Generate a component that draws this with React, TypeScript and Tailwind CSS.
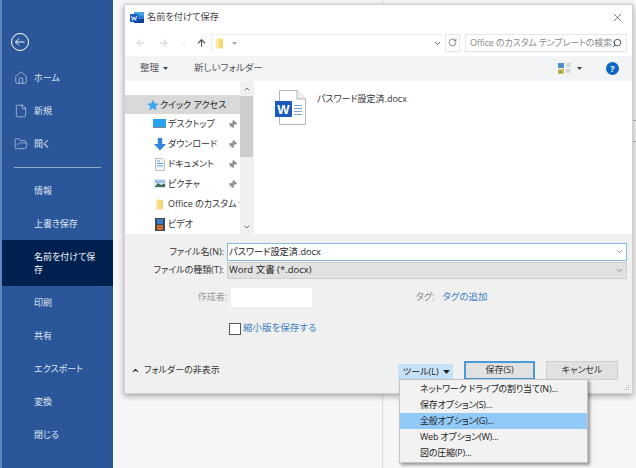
import React from "react";
import { ArrowLeft, ArrowRight, ArrowUp, ChevronDown, ChevronUp, Home, File, FolderOpen, RotateCw, Search, X, Pin } from "lucide-react";

const WordSmall = () => (
  <svg width="14" height="13" viewBox="0 0 14 13">
    <rect x="4" y="1" width="10" height="11" rx="1" fill="#2b7cd3" />
    <rect x="4" y="1" width="10" height="3.5" fill="#41a5ee" />
    <rect x="4" y="8" width="10" height="4" fill="#103f91" />
    <rect x="0" y="3" width="8" height="8" fill="#185abd" />
    <path d="M1.4 4.8 L2.6 9.2 L4 6 L5.4 9.2 L6.6 4.8" stroke="#fff" strokeWidth="0.9" fill="none" />
  </svg>
);

const WordDoc = () => (
  <svg width="32" height="36" viewBox="0 0 32 36">
    <path d="M4.5 .5 H22 L30.5 9 V34.5 H4.5 Z" fill="#fff" stroke="#b5b5b5" />
    <path d="M22 .5 V9 H30.5" fill="#f0f0f0" stroke="#b5b5b5" />
    <rect x="0" y="11" width="17" height="16" fill="#185abd" />
    <text x="8.5" y="23.5" textAnchor="middle" fontSize="13" fontWeight="700" fill="#fff" fontFamily="Liberation Sans">W</text>
    <path d="M19 15.5 H27 M19 18.5 H27 M19 21.5 H27 M19 24.5 H27" stroke="#7ba7dc" strokeWidth="1.2" />
  </svg>
);

const Folder = () => (
  <svg width="7" height="11" viewBox="0 0 8 11">
    <rect x="0" y="0" width="8" height="11" fill="#f7d674" />
    <rect x="0" y="0" width="3" height="11" fill="#fbe7a6" />
  </svg>
);

const Star = () => (
  <svg width="12" height="12" viewBox="0 0 24 24">
    <path d="M12 1 L15.4 8.6 L23.5 9.4 L17.4 14.8 L19.2 23 L12 18.7 L4.8 23 L6.6 14.8 L.5 9.4 L8.6 8.6 Z" fill="#3da5ee" />
  </svg>
);

const Desktop = () => (
  <svg width="13" height="10" viewBox="0 0 13 10">
    <rect width="13" height="8" fill="#2aa3ef" />
    <rect y="8" width="13" height="1" fill="#7b8b99" />
  </svg>
);

const Down = () => (
  <svg width="12" height="13" viewBox="0 0 12 13">
    <path d="M3.8 0 H8.2 V6 H12 L6 12.5 L0 6 H3.8 Z" fill="#2f84dc" />
  </svg>
);

const Docs = () => (
  <svg width="10" height="13" viewBox="0 0 10 13">
    <path d="M.5 .5 H7 L9.5 3 V12.5 H.5 Z" fill="#f3f6f8" stroke="#b8bec4" />
    <path d="M2 3 H5 M2 5.5 H8 M2 8 H8" stroke="#5aa6dc" strokeWidth="1" />
  </svg>
);

const Pic = () => (
  <svg width="12" height="10" viewBox="0 0 12 10">
    <rect width="12" height="9" fill="#dfe8ee" />
    <rect x="1" y="1" width="10" height="3" fill="#9cc3df" />
    <path d="M1 7.5 L4 4 L7 6 L11 4.5 V8 H1 Z" fill="#40705a" />
  </svg>
);

const Video = () => (
  <svg width="10" height="13" viewBox="0 0 10 13">
    <rect width="10" height="13" fill="#3d4a55" />
    <rect x="2" y="1" width="6" height="5" fill="#3d79c8" />
    <rect x="2" y="7" width="6" height="5" fill="#c9682f" />
  </svg>
);

const ViewIcon = () => (
  <svg width="13" height="12" viewBox="0 0 13 12">
    <rect x="0" y="0" width="6" height="5" fill="#4e8fc7" />
    <rect x="0" y="6" width="6" height="5" fill="#d9b75a" />
    <rect x="1" y="8" width="3" height="2" fill="#6aa84f" />
    <path d="M8 1 H13 M8 3 H12 M8 7 H13 M8 9 H12" stroke="#bbb" strokeWidth="1" />
  </svg>
);

const Caret = ({ c = "#444", w = 5, h = 3 }: { c?: string; w?: number; h?: number }) => (
  <svg width={w} height={h} viewBox="0 0 5 3"><path d="M0 0 H5 L2.5 3 Z" fill={c} /></svg>
);

const side = (t: string) => (
  <div key={t} className="h-[33px] flex items-center pl-[32px] text-[#dfe7f3]">{t}</div>
);

const nav: [React.ReactNode, string, boolean][] = [
  [<Desktop />, "デスクトップ", true],
  [<Down />, "ダウンロード", true],
  [<Docs />, "ドキュメント", true],
  [<Pic />, "ピクチャ", true],
  [<Folder />, "Office のカスタム テンプレート", false],
  [<Video />, "ビデオ", false],
];

const menu = ["ネットワーク ドライブの割り当て(N)...", "保存オプション(S)...", "全般オプション(G)...", "Web オプション(W)...", "図の圧縮(P)..."];

export default function App() {
  return (
    <div className="relative w-[636px] h-[468px] overflow-hidden flex bg-[#f6f6f6] font-['Open_Sans','Noto_Sans_CJK_JP',sans-serif] [font-feature-settings:'palt'] text-[9px] text-[#333]">
      {/* backstage sidebar */}
      <aside className="w-[113px] shrink-0 bg-[#2b579a] border-l-2 border-[#5f86bd] flex flex-col">
        <div className="pt-[32px] pl-[8px] h-[61px]">
          <svg width="20" height="20" viewBox="0 0 20 20" fill="none" stroke="#fff" strokeWidth="1">
            <circle cx="10" cy="10" r="8.5" />
            <path d="M14.5 10 H5.5 M9 6.5 L5.5 10 L9 13.5" />
          </svg>
        </div>
        {[
          [<Home key="a" size={14} strokeWidth={1} />, "ホーム"],
          [<File key="b" size={14} strokeWidth={1} />, "新規"],
          [<FolderOpen key="c" size={14} strokeWidth={1} />, "開く"],
        ].map(([icon, t], i) => (
          <div key={i} className="h-[33px] flex items-center pl-[12px] gap-[6px] text-[#dfe7f3]">
            {icon}
            <span>{t}</span>
          </div>
        ))}
        <div className="mx-[12px] mt-[7px] mb-[6px] h-px bg-[#8fa9cf]" />
        {side("情報")}
        {side("上書き保存")}
        <div className="h-[46px] bg-[#002050] flex items-center pl-[32px] text-[#f2f5fa] leading-[13px] whitespace-nowrap">
          <span>名前を付けて保<br />存</span>
        </div>
        {["印刷", "共有", "エクスポート", "変換", "閉じる"].map((t) => side(t))}
      </aside>

      {/* content behind the dialog */}
      <div className="flex-1 flex justify-start">
        <div className="ml-[269px] w-px bg-[#dcdcdc]" />
      </div>
      <div className="absolute right-0 top-[120px] w-[4px] h-px bg-[#bdbdbd]" />
      <div className="absolute right-0 top-[141px] w-[4px] h-px bg-[#bdbdbd]" />

      {/* dialog window */}
      <section className="absolute left-[124px] top-[4px] w-[509px] h-[390px] bg-white border border-[#d0d0d0] shadow-[0_2px_6px_rgba(0,0,0,0.35)] flex flex-col">
        <header className="h-[24px] flex items-center pl-[5px] pr-[8px] gap-[2px]">
          <WordSmall />
          <span className="ml-[1px] text-[9.2px] text-[#444]">名前を付けて保存</span>
          <X size={13} strokeWidth={1.1} className="ml-auto text-[#222]" />
        </header>

        <div className="h-[27px] flex items-center pl-[10px] pr-[5px]">
          <ArrowLeft size={12} className="text-[#c8c8c8]" />
          <ArrowRight size={12} className="ml-[12px] text-[#c8c8c8]" />
          <ChevronDown size={8} className="ml-[11px] text-[#c8c8c8]" />
          <ArrowUp size={12} strokeWidth={2.4} className="ml-[8px] text-[#555]" />
          <div className="ml-[4px] h-[18px] w-[240px] flex items-center border-l border-t border-[#eeeeee] pl-[4px]">
            <Folder />
            <span className="ml-[9px]"><Caret c="#aaa" /></span>
            <div className="flex-1" />
          </div>
          <div className="flex-1 h-[18px] flex items-center justify-end border-t border-[#eeeeee]">
            <ChevronDown size={9} strokeWidth={2.5} className="text-[#555]" />
          </div>
          <div className="ml-[3px] w-[16px] h-[18px] flex items-center justify-center border border-[#e6e6e6]">
            <RotateCw size={9} strokeWidth={1.8} className="text-[#555]" />
          </div>
          <div className="ml-[5px] w-[168px] h-[18px] flex items-center pl-[4px] pr-[4px] border border-[#e6e6e6] text-[#8a8a8a] whitespace-nowrap">
            <span className="flex-1 text-[9px] tracking-[-0.15px]">Office のカスタム テンプレートの検索</span>
            <Search size={10} strokeWidth={2} className="text-[#333] -scale-x-100 shrink-0" />
          </div>
        </div>

        <div className="h-[25px] bg-[#f3f4f6] flex items-center pl-[15px] pr-[13px] text-[#555] text-[9.5px]">
          <span>整理</span>
          <span className="ml-[4px]"><Caret /></span>
          <span className="ml-[26px]">新しいフォルダー</span>
          <span className="ml-auto"><ViewIcon /></span>
          <span className="ml-[6px]"><Caret /></span>
          <span className="ml-[24px] w-[13px] h-[13px] rounded-full bg-[#0a66c2] text-white text-[9px] font-bold flex items-center justify-center">?</span>
        </div>

        <div className="h-[153px] flex bg-white">
          <div className="w-[115px] shrink-0 pt-[14px] overflow-hidden">
            <div className="h-[19px] bg-[#d9d9d9] flex items-center pl-[22px] gap-[1px] text-[#222] whitespace-nowrap">
              <Star />
              <span>クイック アクセス</span>
            </div>
            {nav.map(([icon, t, pin]) => (
              <div key={t} className="h-[20px] flex items-center pl-[27px] text-[#333] whitespace-nowrap">
                <span className="w-[15px] shrink-0 flex justify-center">{icon}</span>
                <span className="ml-[1px] flex-1 overflow-hidden">{t}</span>
                {pin && <Pin size={9} className="text-[#8f8f8f] mr-[3px] rotate-45 shrink-0" fill="#8f8f8f" />}
              </div>
            ))}
          </div>
          <div className="w-[13px] shrink-0 bg-[#f0f0f0] flex flex-col items-center">
            <div className="h-[15px] flex items-center"><ChevronUp size={8} strokeWidth={2.4} className="text-[#555]" /></div>
            <div className="w-full h-[61px] bg-[#cdcdcd]" />
            <div className="mt-auto h-[15px] flex items-center"><ChevronDown size={8} strokeWidth={2.4} className="text-[#555]" /></div>
          </div>
          <div className="flex-1 border-l border-[#f0f0f0] pl-[21px] pt-[9px] flex items-start">
            <WordDoc />
            <span className="ml-[10px] mt-[2px] text-[9px] text-[#333]">パスワード設定済.docx</span>
          </div>
        </div>

        <div className="relative flex-1 bg-[#f0f0f0] flex flex-col pt-[8px] pr-[5px]">
          <div className="h-[19px] flex items-center">
            <label className="w-[102px] text-right pr-[3px] text-[#333]">ファイル名(N):</label>
            <div className="flex-1 h-[18px] bg-white border border-[#84bbd6] flex items-center pl-[1px] pr-[2px]">
              <span className="flex-1 text-[9.2px] text-[#222]">パスワード設定済.docx</span>
              <ChevronDown size={9} className="text-[#777]" />
            </div>
          </div>
          <div className="h-[18px] flex items-center">
            <label className="w-[102px] text-right pr-[3px] text-[#333]">ファイルの種類(T):</label>
            <div className="flex-1 h-[17px] bg-[#e1e1e1] border border-[#cfcfcf] flex items-center pl-[1px] pr-[2px]">
              <span className="flex-1 text-[9.5px] text-[#222]">Word 文書 (*.docx)</span>
              <ChevronDown size={9} className="text-[#777]" />
            </div>
          </div>
          <div className="mt-[8px] h-[20px] flex items-center">
            <label className="w-[102px] text-right text-[#9a9a9a]">作成者:</label>
            <div className="ml-[4px] w-[81px] h-[19px] bg-white" />
            <span className="ml-[104px] text-[#8a8a8a]">タグ:</span>
            <span className="ml-[8px] text-[#3b7fc4] text-[9.5px]">タグの追加</span>
          </div>
          <div className="mt-[15px] h-[13px] flex items-center pl-[104px]">
            <span className="w-[12px] h-[12px] bg-white border border-[#555]" />
            <span className="ml-[2px] text-[#3b7fc4] text-[9.5px]">縮小版を保存する</span>
          </div>
          <div className="mt-[19px] h-[32px] flex items-center pl-[6px]">
            <ChevronUp size={9} strokeWidth={3} className="text-[#333]" />
            <span className="ml-[4px] text-[#333]">フォルダーの非表示</span>
            <div className="ml-auto flex items-center pr-[9px]">
              <div className="w-[55px] h-[16px] bg-[#c7e2f6] mt-[3px] flex items-center pl-[5px] pr-[3px] text-[#222]">
                <span className="flex-1">ツール(L)</span>
                <Caret c="#222" w={7} h={4} />
              </div>
              <div className="ml-[11px] w-[71px] h-[19px] bg-[#e1e1e1] border-2 border-[#4a9ad8] flex items-center justify-center text-[#333]">保存(S)</div>
              <div className="ml-[11px] w-[72px] h-[19px] bg-[#e1e1e1] border border-[#cfcfcf] flex items-center justify-center text-[#333]">キャンセル</div>
            </div>
          </div>
          <svg className="absolute right-[2px] bottom-[2px]" width="6" height="6" viewBox="0 0 6 6" fill="#b0b0b0">
            <rect x="4" y="0" width="1" height="1" /><rect x="2" y="2" width="1" height="1" /><rect x="4" y="2" width="1" height="1" />
            <rect x="0" y="4" width="1" height="1" /><rect x="2" y="4" width="1" height="1" /><rect x="4" y="4" width="1" height="1" />
          </svg>
        </div>
      </section>

      {/* tools dropdown */}
      <div className="absolute left-[399px] top-[379px] w-[189px] bg-[#f2f2f2] border border-[#c4c4c4] shadow-[2px_2px_3px_rgba(0,0,0,0.4)] py-[1px]">
        {menu.map((m, i) => (
          <div key={m} className={`h-[16px] flex items-center pl-[20px] text-[#222] whitespace-nowrap tracking-[-0.2px] ${i === 2 ? "bg-[#91c9f7]" : ""}`}>{m}</div>
        ))}
      </div>
    </div>
  );
}
